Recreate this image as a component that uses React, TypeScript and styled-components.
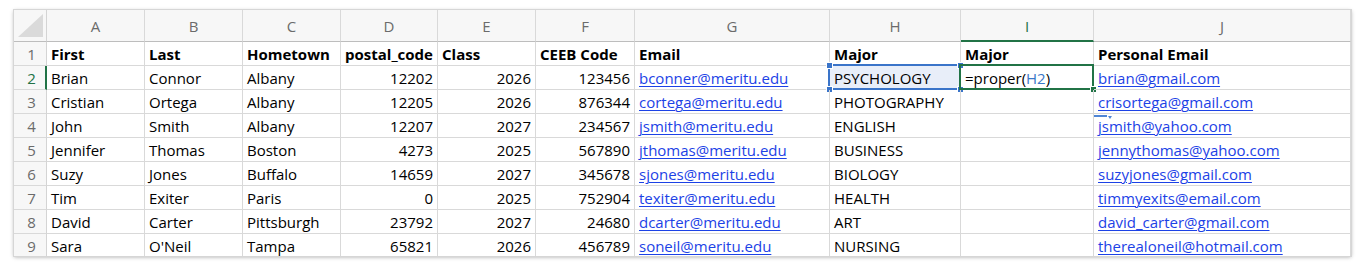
import React from "react";
import styled, { createGlobalStyle, css } from "styled-components";

const Global = createGlobalStyle`
  html, body { margin: 0; padding: 0; background: #ffffff; }
  body { font-family: "Open Sans", Lato, sans-serif; }
`;

const COLS = [33, 98, 98, 98, 97, 98, 99, 195, 131, 133, 257];
const LETTERS = ["A", "B", "C", "D", "E", "F", "G", "H", "I", "J"];

const header: string[] = ["First", "Last", "Hometown", "postal_code", "Class", "CEEB Code", "Email", "Major", "Major", "Personal Email"];

const data: string[][] = [
  ["Brian", "Connor", "Albany", "12202", "2026", "123456", "bconner@meritu.edu", "PSYCHOLOGY", "", "brian@gmail.com"],
  ["Cristian", "Ortega", "Albany", "12205", "2026", "876344", "cortega@meritu.edu", "PHOTOGRAPHY", "", "crisortega@gmail.com"],
  ["John", "Smith", "Albany", "12207", "2027", "234567", "jsmith@meritu.edu", "ENGLISH", "", "jsmith@yahoo.com"],
  ["Jennifer", "Thomas", "Boston", "4273", "2025", "567890", "jthomas@meritu.edu", "BUSINESS", "", "jennythomas@yahoo.com"],
  ["Suzy", "Jones", "Buffalo", "14659", "2027", "345678", "sjones@meritu.edu", "BIOLOGY", "", "suzyjones@gmail.com"],
  ["Tim", "Exiter", "Paris", "0", "2025", "752904", "texiter@meritu.edu", "HEALTH", "", "timmyexits@email.com"],
  ["David", "Carter", "Pittsburgh", "23792", "2027", "24680", "dcarter@meritu.edu", "ART", "", "david_carter@gmail.com"],
  ["Sara", "O'Neil", "Tampa", "65821", "2026", "456789", "soneil@meritu.edu", "NURSING", "", "therealoneil@hotmail.com"],
];

const Page = styled.div`
  padding: 10px 0 0 14px;
  width: 1368px;
  height: 272px;
  box-sizing: border-box;
`;

const Sheet = styled.div`
  display: grid;
  grid-template-columns: ${COLS.map((c) => c + "px").join(" ")};
  grid-template-rows: 32px repeat(9, 24px);
  width: 1337px;
  height: 246px;
  overflow: hidden;
  background: #fff;
  box-shadow: 0 0 0 1px #d6d6d6, 0 1px 4px rgba(0, 0, 0, 0.35);
  font-size: 15px;
  color: #000;
`;

const Corner = styled.div`
  position: relative;
  background: #f7f7f7;
  border-right: 1px solid #d4d4d4;
  border-bottom: 1px solid #bdbdbd;
  box-sizing: border-box;
`;

const CornerTri = styled.div`
  position: absolute;
  right: 3px;
  bottom: 4px;
  width: 0;
  height: 0;
  border-left: 25px solid transparent;
  border-bottom: 23px solid #dadada;
`;

const ColHead = styled.div<{ $active?: boolean }>`
  background: #f7f7f7;
  border-right: 1px solid #d9d9d9;
  border-bottom: 1px solid #bdbdbd;
  box-sizing: border-box;
  display: flex;
  align-items: center;
  justify-content: center;
  color: #6b6b6b;
  font-size: 15px;
  ${(p) =>
    p.$active &&
    css`
      color: #217346;
      border-bottom: 2px solid #217346;
      padding-top: 1px;
    `}
`;

const RowHead = styled.div<{ $active?: boolean }>`
  background: #f7f7f7;
  border-right: 1px solid #d4d4d4;
  border-bottom: 1px solid #d9d9d9;
  box-sizing: border-box;
  display: flex;
  align-items: center;
  justify-content: center;
  color: #6b6b6b;
  font-size: 15px;
  padding-left: 3px;
  ${(p) =>
    p.$active &&
    css`
      color: #217346;
      border-right: 2px solid #217346;
      padding-left: 4px;
    `}
`;

const CellBox = styled.div<{ $align?: "right" | "left"; $bold?: boolean; $fill?: string }>`
  position: relative;
  border-right: 1px solid #d9d9d9;
  border-bottom: 1px solid #d9d9d9;
  box-sizing: border-box;
  display: flex;
  align-items: center;
  justify-content: ${(p) => (p.$align === "right" ? "flex-end" : "flex-start")};
  padding: 1px 4px 0 4px;
  white-space: nowrap;
  font-weight: ${(p) => (p.$bold ? 700 : 400)};
  background: ${(p) => p.$fill || "transparent"};
`;

const Link = styled.span`
  color: #1c42e6;
  text-decoration: underline;
  text-underline-offset: 2px;
  text-decoration-thickness: 1px;
`;

const Ref = styled.span`
  color: #3a78c8;
`;

const Frame = styled.div<{ $color: string }>`
  position: absolute;
  left: -2px;
  top: -2px;
  right: -1px;
  bottom: -1px;
  border: 2px solid ${(p) => p.$color};
  pointer-events: none;
`;

const Handle = styled.div<{ $color: string; $x: "l" | "r"; $y: "t" | "b" }>`
  position: absolute;
  width: 5px;
  height: 5px;
  background: ${(p) => p.$color};
  border: 1px solid #fff;
  ${(p) => (p.$x === "l" ? "left: -4px;" : "right: -4px;")}
  ${(p) => (p.$y === "t" ? "top: -4px;" : "bottom: -4px;")}
`;

const Marker = styled.div`
  position: absolute;
  left: 0px;
  top: 1px;
  display: flex;
  align-items: flex-start;
  gap: 1px;
`;

const MarkerLine = styled.div`
  width: 13px;
  height: 2px;
  background: #4f86d6;
`;

const MarkerTri = styled.div`
  width: 0;
  height: 0;
  margin-top: 1px;
  border-left: 2px solid transparent;
  border-right: 2px solid transparent;
  border-top: 3px solid #4f86d6;
`;

const isNum = (ci: number) => ci >= 3 && ci <= 5;
const isLink = (ci: number) => ci === 6 || ci === 9;

export default function App() {
  return (
    <>
      <Global />
      <Page>
        <Sheet>
          <Corner>
            <CornerTri />
          </Corner>
          {LETTERS.map((l) => (
            <ColHead key={l} $active={l === "I"}>
              {l}
            </ColHead>
          ))}
          <RowHead>1</RowHead>
          {header.map((h, i) => (
            <CellBox key={"h" + i} $bold>
              {h}
            </CellBox>
          ))}
          {data.map((row, ri) => (
            <React.Fragment key={ri}>
              <RowHead $active={ri === 0}>{ri + 2}</RowHead>
              {row.map((v, ci) => {
                const isH2 = ri === 0 && ci === 7;
                const isI2 = ri === 0 && ci === 8;
                const isJ4 = ri === 2 && ci === 9;
                return (
                  <CellBox key={ci} $align={isNum(ci) ? "right" : "left"} $fill={isH2 ? "#e8eef9" : undefined}>
                    {isLink(ci) ? <Link>{v}</Link> : v}
                    {isI2 && (
                      <>
                        =proper(<Ref>H2</Ref>)
                        <Frame $color="#217346" />
                        <Handle $color="#217346" $x="r" $y="b" />
                      </>
                    )}
                    {isH2 && (
                      <>
                        <Frame $color="#3a74c9" />
                        <Handle $color="#3a74c9" $x="l" $y="t" />
                        <Handle $color="#3a74c9" $x="r" $y="t" />
                        <Handle $color="#3a74c9" $x="l" $y="b" />
                        <Handle $color="#3a74c9" $x="r" $y="b" />
                      </>
                    )}
                    {isJ4 && (
                      <Marker>
                        <MarkerLine />
                        <MarkerTri />
                      </Marker>
                    )}
                  </CellBox>
                );
              })}
            </React.Fragment>
          ))}
        </Sheet>
      </Page>
    </>
  );
}
